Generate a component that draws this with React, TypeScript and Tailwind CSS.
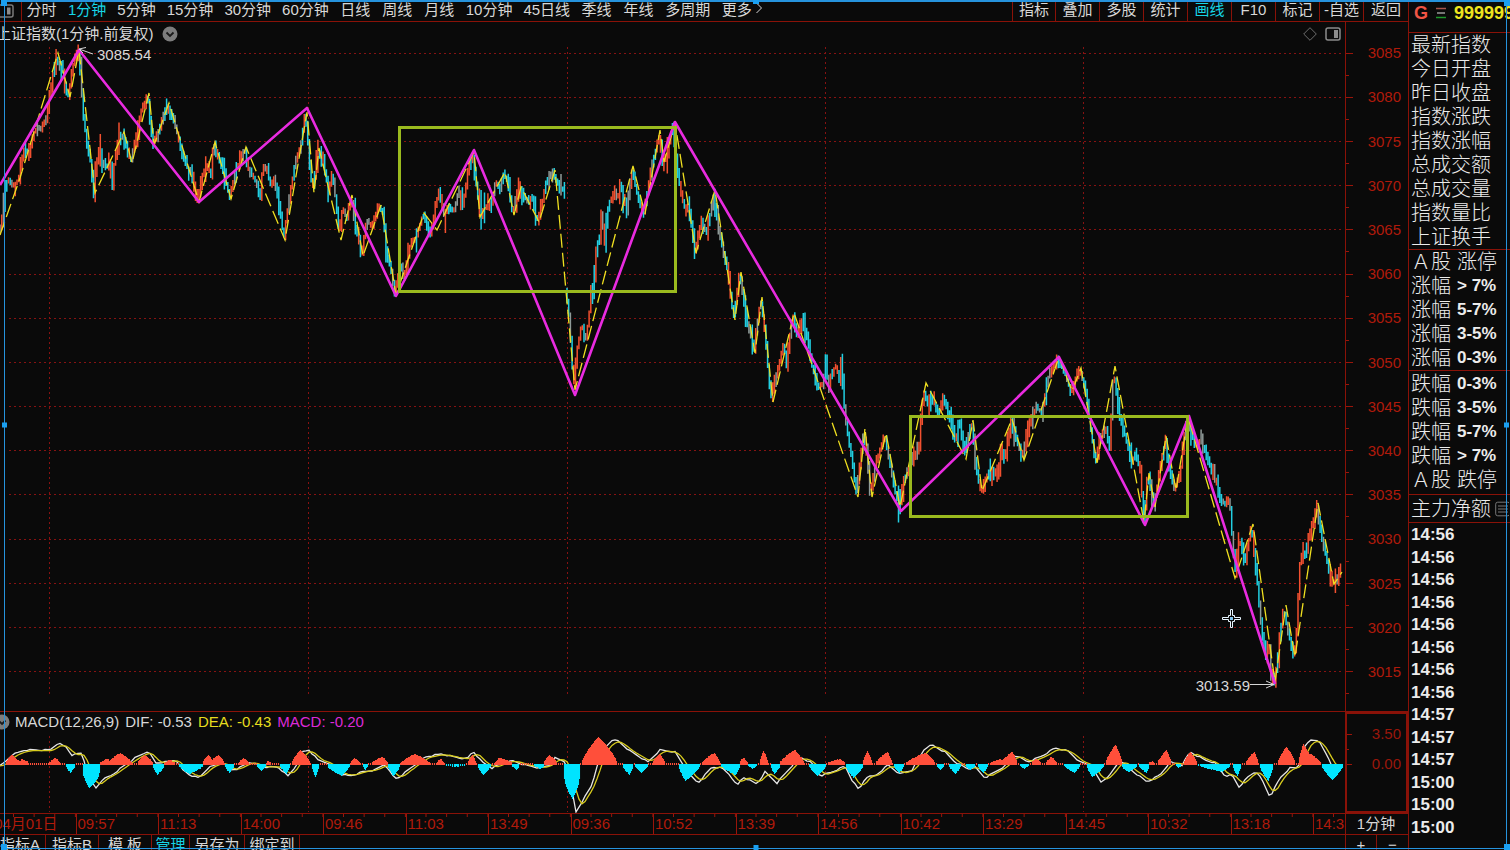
import React from "react";

type Point = [number, number];

const periods = ["分时", "1分钟", "5分钟", "15分钟", "30分钟", "60分钟", "日线", "周线", "月线", "10分钟", "45日线", "季线", "年线", "多周期", "更多"];
const tools = ["指标", "叠加", "多股", "统计", "画线", "F10", "标记", "-自选", "返回"];
const priceLabels = [3085, 3080, 3075, 3070, 3065, 3060, 3055, 3050, 3045, 3040, 3035, 3030, 3025, 3020, 3015];
const timeLabels = ["09:57", "11:13", "14:00", "09:46", "11:03", "13:49", "09:36", "10:52", "13:39", "14:56", "10:42", "13:29", "14:45", "10:32", "13:18", "14:33"];
const quoteRows = ["最新指数", "今日开盘", "昨日收盘", "指数涨跌", "指数涨幅", "总成交额", "总成交量", "指数量比", "上证换手"];
const riseRows = [["A股", "涨停"], ["涨幅", "> 7%"], ["涨幅", "5-7%"], ["涨幅", "3-5%"], ["涨幅", "0-3%"]];
const fallRows = [["跌幅", "0-3%"], ["跌幅", "3-5%"], ["跌幅", "5-7%"], ["跌幅", "> 7%"], ["A股", "跌停"]];
const ticks = ["14:56", "14:56", "14:56", "14:56", "14:56", "14:56", "14:56", "14:56", "14:57", "14:57", "14:57", "15:00", "15:00", "15:00"];

const gridX = [49.5, 308.5, 567.5, 825.5, 1083.5];
const gridY = priceLabels.map((_, i) => Math.round(52.6 + i * 44.18) + 0.5);

const session1: Point[] = [
  [0, 232], [4, 215], [7, 185], [10, 178], [15, 186], [20, 178], [25, 150], [30, 152], [36, 130], [42, 127], [48, 118], [51, 95], [54, 75], [58, 56], [61, 68],
  [64, 64], [66, 84], [70, 95], [74, 68], [77, 54], [80, 52], [83, 90], [85, 115], [88, 142], [92, 160], [95, 190], [98, 165], [100, 146], [103, 160], [107, 166],
  [112, 162], [114, 185], [116, 158], [120, 138], [124, 134], [128, 146], [132, 161], [138, 135], [142, 112], [149, 94], [151, 118], [154, 143], [160, 130],
  [164, 118], [168, 104], [174, 115], [178, 130], [183, 152], [188, 166], [193, 172], [199, 200], [204, 175], [210, 162], [212, 180], [215, 143], [220, 155],
  [226, 175], [231, 197], [237, 170], [246, 148], [250, 168], [256, 178], [262, 198], [264, 165], [268, 168], [272, 184], [276, 178], [280, 200], [285, 236],
  [291, 195], [297, 160], [302, 144], [307, 114], [310, 150], [314, 190], [319, 150], [324, 155], [330, 192], [334, 170], [341, 236], [344, 205], [348, 218],
  [353, 196], [357, 225], [363, 252], [368, 220], [373, 225], [380, 206], [385, 212], [387, 250], [392, 265], [396, 293], [402, 260], [405, 278], [412, 242],
  [418, 236], [424, 214], [432, 234], [437, 204], [441, 190], [445, 214], [450, 206], [455, 211], [460, 190], [464, 206], [470, 168], [474, 153], [478, 185],
  [482, 214], [488, 205], [492, 208], [497, 180], [501, 190], [505, 173], [509, 180], [514, 212], [521, 188], [526, 196], [530, 204], [533, 195], [538, 220],
  [543, 205], [547, 182], [554, 171], [560, 184], [566, 190],
];
const session2: Point[] = [
  [567, 290], [570, 308], [573, 350], [575, 388], [578, 352], [583, 323], [587, 338], [590, 320], [593, 285], [595, 303], [597, 250], [601, 237], [603, 208],
  [606, 243], [610, 203], [616, 190], [619, 199], [622, 180], [628, 212], [633, 170], [638, 190], [645, 213], [652, 172], [657, 150], [660, 134], [664, 160],
  [669, 152], [674, 124], [677, 155], [682, 190], [687, 210], [691, 208], [696, 250], [703, 220], [708, 233], [711, 216], [715, 194], [717, 210], [723, 243],
  [729, 270], [735, 317], [741, 274], [748, 320], [752, 335], [755, 350], [762, 298], [767, 337], [772, 398], [778, 375], [785, 342], [788, 363], [794, 314],
  [799, 336], [802, 322], [808, 330], [813, 363], [819, 386], [825, 383], [827, 354], [830, 392], [833, 370], [838, 365], [841, 382], [843, 354], [846, 410],
  [850, 440], [854, 462], [858, 493], [865, 430], [868, 452], [872, 495], [877, 460], [880, 455], [886, 434], [893, 473], [900, 506], [904, 482], [908, 475],
  [913, 457], [920, 450], [925, 390], [930, 406], [933, 394], [940, 416], [944, 394], [950, 412], [957, 440], [961, 418], [966, 452], [973, 422], [978, 470],
  [982, 490], [990, 472], [998, 474], [1003, 452], [1007, 458], [1012, 421], [1018, 438], [1023, 457], [1030, 425], [1038, 406], [1043, 413], [1050, 375],
  [1054, 366], [1059, 359], [1065, 368], [1072, 390], [1081, 370], [1088, 392], [1091, 420], [1097, 462], [1102, 434], [1108, 428], [1111, 447], [1115, 369],
  [1120, 410], [1126, 432], [1133, 462], [1137, 450], [1142, 472], [1145, 520], [1149, 474], [1155, 505], [1162, 465], [1167, 438], [1170, 466], [1176, 489],
  [1182, 470], [1188, 418], [1193, 434], [1197, 445], [1202, 440], [1208, 453], [1213, 470], [1218, 482], [1222, 500], [1227, 504], [1231, 497], [1234, 540],
  [1237, 570], [1241, 537], [1246, 560], [1253, 526], [1258, 572], [1262, 620], [1267, 655], [1271, 645], [1273, 680], [1276, 680], [1280, 647], [1285, 608],
  [1290, 633], [1295, 655], [1298, 633], [1301, 565], [1304, 550], [1307, 556], [1310, 538], [1313, 527], [1318, 504], [1323, 537], [1328, 557], [1334, 582],
  [1338, 578], [1342, 567],
];
const swings: Point[] = [
  [0, 235], [20, 178], [58, 53], [70, 97], [79, 50], [95, 193], [124, 132], [132, 163], [149, 93], [154, 145], [169, 103], [199, 202], [215, 142], [231, 199],
  [246, 147], [285, 240], [307, 112], [314, 193], [319, 148], [341, 240], [352, 195], [363, 256], [381, 205], [396, 295], [424, 213], [437, 230], [474, 152],
  [480, 217], [505, 172], [514, 215], [521, 187], [539, 222], [555, 170], [575, 390], [633, 166], [645, 214], [660, 130], [664, 162], [675, 123], [696, 253],
  [715, 190], [735, 320], [741, 272], [755, 353], [762, 297], [773, 402], [794, 313], [858, 497], [865, 428], [872, 497], [886, 433], [900, 507], [926, 383],
  [966, 459], [973, 420], [982, 491], [1012, 419], [1024, 460], [1059, 357], [1072, 391], [1081, 368], [1097, 463], [1115, 366], [1144, 522], [1149, 473],
  [1155, 507], [1166, 436], [1176, 490], [1188, 417], [1235, 578], [1253, 524], [1275, 682], [1286, 605], [1295, 657], [1318, 503], [1334, 584], [1342, 572],
];
const waves: Point[] = [
  [0, 185], [79, 50], [199, 202], [307, 108], [396, 296], [474, 150], [575, 395], [675, 122], [901, 511], [1059, 357], [1145, 525], [1189, 416], [1275, 684],
];

/* start, end, peak x, height above the zero line */
const humps: [number, number, number, number][] = [
  [5, 20, 11, 9], [17, 29, 22, 5], [48, 60, 55, 6], [65, 75, 70, -8], [82, 100, 89, -23], [98, 112, 107, 5], [107, 132, 120, 11], [137, 153, 144, 9],
  [152, 164, 157, -10], [163, 175, 169, 4], [178, 204, 189, -9], [202, 213, 208, 9], [209, 224, 218, 9], [224, 234, 229, -8], [238, 249, 243, 6],
  [256, 266, 261, -6], [265, 272, 268, 3], [279, 290, 286, -9], [291, 310, 300, 14], [311, 319, 315, -12], [326, 350, 341, -11], [350, 360, 354, 6],
  [362, 368, 365, -5], [370, 388, 382, 7], [387, 400, 393, -11], [400, 430, 414, 10], [436, 444, 440, 5], [445, 465, 455, -2], [467, 476, 472, 9],
  [477, 491, 483, -10], [494, 513, 499, 6], [511, 520, 516, -5], [532, 545, 540, -4], [543, 557, 549, 9], [563, 580, 572, -34], [581, 617, 598, 27],
  [581, 594, 590, 15], [622, 633, 629, -10], [634, 648, 641, -8], [652, 665, 659, 10], [678, 700, 685, -16], [701, 720, 714, 11], [720, 740, 735, -10],
  [738, 748, 743, 6], [747, 758, 752, -4], [759, 768, 763, 13], [770, 780, 774, -9], [779, 804, 794, 14], [808, 826, 817, -11], [826, 845, 840, 5],
  [845, 863, 853, -13], [862, 872, 867, 13], [875, 892, 887, 12], [893, 904, 899, -8], [905, 935, 925, 11], [936, 944, 940, -5], [948, 961, 955, -9],
  [964, 975, 970, -5], [977, 988, 983, -8], [989, 1005, 1000, 5], [1000, 1017, 1012, 12], [1019, 1029, 1024, -4], [1030, 1041, 1036, 5],
  [1045, 1057, 1051, 7], [1063, 1080, 1074, -8], [1086, 1104, 1092, -12], [1105, 1122, 1115, 19], [1120, 1138, 1128, -7], [1138, 1149, 1146, -8],
  [1148, 1155, 1152, 3], [1157, 1171, 1166, 14], [1174, 1182, 1178, -3], [1183, 1197, 1190, 12], [1197, 1230, 1222, -7], [1232, 1241, 1237, -11],
  [1245, 1258, 1254, 12], [1259, 1273, 1268, -16], [1277, 1295, 1286, 17], [1298, 1312, 1303, 20], [1302, 1321, 1308, 11], [1321, 1343, 1332, -15],
];
const dif: Point[] = [
  [0, 766], [5, 762], [12, 755], [25, 750], [50, 750], [58, 743], [66, 747], [72, 755], [82, 753], [86, 768], [90, 780], [96, 788], [102, 780], [112, 775],
  [125, 765], [135, 758], [148, 751], [156, 763], [165, 762], [176, 760], [183, 770], [190, 775], [199, 778], [208, 768], [222, 762], [230, 770], [237, 769],
  [250, 762], [262, 767], [278, 767], [288, 776], [296, 766], [302, 752], [309, 750], [318, 760], [328, 763], [340, 774], [350, 776], [362, 772], [375, 770],
  [385, 764], [392, 775], [397, 779], [412, 767], [425, 757], [441, 754], [455, 757], [467, 759], [473, 751], [482, 762], [492, 768], [505, 762], [513, 761],
  [525, 765], [540, 768], [550, 765], [555, 758], [566, 762], [570, 780], [576, 812], [583, 800], [592, 785], [597, 766], [603, 750], [612, 740], [618, 741],
  [630, 751], [640, 757], [648, 762], [660, 750], [675, 752], [682, 763], [690, 775], [698, 783], [712, 767], [722, 768], [730, 775], [737, 786], [743, 777],
  [757, 784], [765, 772], [777, 783], [790, 768], [800, 757], [812, 763], [820, 776], [832, 772], [845, 766], [852, 780], [859, 790], [866, 777], [875, 776],
  [888, 765], [900, 774], [912, 770], [925, 748], [932, 745], [945, 752], [955, 762], [968, 769], [975, 767], [985, 778], [1005, 766], [1015, 755], [1028, 762],
  [1042, 756], [1055, 748], [1068, 751], [1080, 762], [1090, 765], [1101, 782], [1110, 775], [1120, 760], [1130, 769], [1147, 782], [1160, 775], [1170, 762],
  [1182, 765], [1190, 752], [1205, 760], [1215, 763], [1225, 776], [1232, 775], [1239, 787], [1248, 777], [1256, 771], [1262, 780], [1270, 797], [1280, 778],
  [1290, 768], [1298, 768], [1304, 748], [1310, 740], [1318, 740], [1328, 757], [1333, 768], [1341, 768],
];

function valueAt(points: Point[], x: number) {
  for (let i = 1; i < points.length; i++) {
    if (x <= points[i][0]) {
      const [x0, y0] = points[i - 1];
      const [x1, y1] = points[i];
      return y0 + ((y1 - y0) * (x - x0)) / (x1 - x0);
    }
  }
  return points[points.length - 1][1];
}

function makeRandom(seed: number) {
  let s = seed;
  return () => {
    s = (s * 16807) % 2147483647;
    return s / 2147483647;
  };
}

const line = (points: Point[]) => points.map(([x, y]) => `${x},${y.toFixed(1)}`).join(" ");

function candlePaths(points: Point[], seed: number) {
  const random = makeRandom(seed);
  const paths = { up: "", down: "", flat: "" };
  const last = points[points.length - 1][0];
  for (let x = points[0][0]; x < last; x += 1.7) {
    const a = valueAt(points, x);
    const b = valueAt(points, Math.min(last, x + 1.7));
    const wick = 2 + random() * random() * 18;
    const top = Math.min(a, b) - wick * random();
    const bottom = Math.max(a, b) + wick * random() + 2;
    const roll = random();
    let kind: "up" | "down" | "flat" = b < a ? "up" : "down";
    if (roll < 0.14) kind = "flat";
    else if (roll < 0.28) kind = kind === "up" ? "down" : "up";
    paths[kind] += `M${x.toFixed(2)} ${top.toFixed(1)}V${bottom.toFixed(1)}`;
  }
  return paths;
}

const candles = [candlePaths(session1, 77), candlePaths(session2, 4211)];

function histogramPaths() {
  let up = "";
  let down = "";
  for (let x = 5; x < 1343; x += 1) {
    let h = 0;
    for (const [start, end, peak, height] of humps) {
      if (x < start || x > end) continue;
      const t = x <= peak ? (x - start) / (peak - start) : (end - x) / (end - peak);
      const v = height * Math.pow(t, height < -20 ? 0.4 : 0.7) + (x % 3 === 0 ? 0.5 : 0);
      if (Math.abs(v) > Math.abs(h)) h = v;
    }
    if (Math.abs(h) < 1.5) {
      if (x % 2 === 0) {
        if (h < 0) down += `M${x}.5 764V766`;
        else up += `M${x}.5 763V765`;
      }
      continue;
    }
    if (h > 0) up += `M${x}.5 765V${Math.round(764 - h)}`;
    else down += `M${x}.5 764V${Math.round(765 - h)}`;
  }
  return { up, down };
}

const histogram = histogramPaths();
const dea: Point[] = [];
const difLine: Point[] = [];
for (let x = 0; x <= 1341; x += 3) {
  const jitter = ((x * 7) % 5) * 0.3 - 0.6;
  difLine.push([x, valueAt(dif, x) + jitter]);
  let sum = 0;
  for (let k = 0; k < 5; k++) sum += valueAt(dif, Math.max(0, x - k * 2));
  dea.push([x, 764 + (sum / 5 - 764) * 0.95]);
}

function PriceChart() {
  return (
    <svg className="absolute inset-0 h-full w-full" viewBox="0 22 1345 689" preserveAspectRatio="none" fill="none" aria-label="上证指数走势">
      <g stroke="#861212" strokeWidth="1" strokeDasharray="2 3">
        {gridY.map((y) => <path key={y} d={`M9 ${y}H1344`} />)}
        {gridX.map((x) => <path key={x} d={`M${x} 47V695`} />)}
      </g>
      {candles.map((c, i) => (
        <g key={i} strokeWidth="1.5">
          <path d={c.flat} stroke="#8f9a98" />
          <path d={c.up} stroke="#f2502f" />
          <path d={c.down} stroke="#22cfe2" />
        </g>
      ))}
      <polyline points={line(swings)} stroke="#f0e020" strokeWidth="1.3" strokeDasharray="14 5" />
      <polyline points={line(waves)} stroke="#e92be0" strokeWidth="2.6" strokeLinejoin="round" />
      <path d="M399.500 127.500H675.500V291.500H399.500ZM910.500 416.500H1187.500V516.500H910.500Z" stroke="#9aba1e" strokeWidth="3" />
      <g stroke="#d6d6d6" strokeWidth="1">
        <path d="M93 54L79 49M86 47.500L79 49L83 53" />
        <path d="M1250 684.500H1274M1266 681L1274 684.500L1266 688" />
      </g>
      <path
        d="M1230.500 609.500H1232.500V615.500H1234.500V617.500H1240.500V619.500H1234.500V621.500H1232.500V627.500H1230.500V621.500H1228.500V619.500H1222.500V617.500H1228.500V615.500H1230.500Z"
        fill="#0a0a0a"
        stroke="#e8f6ff"
      />
      <path d="M1230 617H1233V620H1230Z" fill="#7cc4ee" />
    </svg>
  );
}

function MacdChart() {
  return (
    <svg className="absolute inset-0 h-full w-full" viewBox="0 712 1345 101" preserveAspectRatio="none" fill="none" aria-label="MACD">
      <g stroke="#861212" strokeDasharray="2 3">
        {gridX.map((x) => <path key={x} d={`M${x} 736V812`} />)}
      </g>
      <polyline points={line(difLine)} stroke="#e6e6e6" strokeWidth="1.3" />
      <polyline points={line(dea)} stroke="#d8cc1e" strokeWidth="1.3" />
      <path d={histogram.up} stroke="#ff4f3a" strokeWidth="1.1" />
      <path d={histogram.down} stroke="#00e4ff" strokeWidth="1.1" />
    </svg>
  );
}

function RangeRows({ rows }: { rows: string[][] }) {
  return (
    <ul>
      {rows.map(([name, range]) => (
        <li key={name + range} className="flex h-6 items-center gap-1.5 text-xl leading-6">
          <span>{name === "A股" ? "Ａ股" : name}</span>
          {range.includes("%") ? <b className="text-[17px] font-bold">{range}</b> : <span>{range}</span>}
        </li>
      ))}
    </ul>
  );
}

function ChevronBadge() {
  return (
    <svg width="16" height="16" viewBox="0 0 16 16" fill="none" className="shrink-0">
      <circle cx="8" cy="8" r="7.500" fill="#7d7d7d" />
      <path d="M4.500 6.500L8 10L11.500 6.500" stroke="#1a1a1a" strokeWidth="1.800" />
    </svg>
  );
}

export default function App() {
  return (
    <div className="relative flex h-screen overflow-hidden bg-[#0a0a0a] font-['Liberation_Sans','Noto_Sans_CJK_SC',sans-serif] text-[15px] leading-5 whitespace-nowrap text-[#d8d8d8]">
      <main className="flex min-w-0 flex-1 flex-col">
        <nav className="flex h-[22px] shrink-0 border-b border-[#8a1208] leading-[19px]">
          <button aria-label="侧栏" className="flex w-[22px] items-center border-r border-[#8a1208]">
            <svg width="14" height="14" viewBox="0 0 14 14" fill="none" stroke="#7a7a7a" strokeWidth="1.500">
              <path d="M0 1H11Q13 1 13 3V11Q13 13 11 13H0" />
              <path d="M7 3.500H10.500V10.500H7Z" fill="#8a8a8a" stroke="none" />
            </svg>
          </button>
          <div className="flex min-w-0 flex-1 items-start gap-[11px] overflow-hidden pl-1">
            {periods.map((p) => (
              <button key={p} className={`min-w-[31px] shrink-0 ${p === "1分钟" ? "text-[#16d5e6]" : ""}`}>
                {p}
              </button>
            ))}
            <svg width="8" height="12" viewBox="0 0 8 12" fill="none" stroke="#d8d8d8" className="-ml-2 mt-0.5 shrink-0">
              <path d="M1.500 1L6.500 6L1.500 11" />
            </svg>
          </div>
          <div className="flex shrink-0">
            {tools.map((t) => (
              <button key={t} className={`flex w-11 justify-center border-l border-[#8a1208] first:w-[43px] last:w-[45px] ${t === "画线" ? "text-[#16d5e6]" : ""}`}>
                {t}
              </button>
            ))}
          </div>
        </nav>

        <section className="flex min-h-0 flex-1">
          <div className="relative min-w-0 flex-1">
            <PriceChart />
            <header className="relative flex h-6 items-center justify-between pr-1">
              <h1 className="-ml-1 flex items-center gap-2">
                上证指数(1分钟.前复权)
                <ChevronBadge />
              </h1>
              <div className="flex items-center gap-2">
                <svg width="14" height="14" viewBox="0 0 14 14" fill="none" stroke="#6d6d6d">
                  <path d="M7 .7L13.300 7L7 13.300L.7 7Z" />
                </svg>
                <svg width="16" height="14" viewBox="0 0 16 14" fill="none">
                  <rect x="1" y="1" width="14" height="12" rx="2" stroke="#8a8a8a" strokeWidth="1.500" />
                  <path d="M9 3H13V11H9Z" fill="#8a8a8a" />
                </svg>
              </div>
            </header>
            <span className="absolute top-[23px] left-[97px]">3085.54</span>
            <span className="absolute right-[95px] bottom-[15px]">3013.59</span>
          </div>
          <div className="flex w-[63px] shrink-0 border-l border-[#8a1208] text-[#b01a0b]">
            <svg className="h-full w-2" viewBox="0 22 8 689" preserveAspectRatio="none" stroke="#9a150a">
              {gridY.map((y) => <path key={y} d={`M0 ${y}H7M0 ${y + 22}H3`} />)}
            </svg>
            <ul className="flex flex-1 flex-col pt-[9px] pr-[7px] pb-[17px]">
              {priceLabels.map((p) => (
                <li key={p} className="flex flex-1 items-center justify-end">{p}</li>
              ))}
            </ul>
          </div>
        </section>

        <section className="flex h-[102px] shrink-0 border-t border-[#8a1208]">
          <div className="relative min-w-0 flex-1">
            <MacdChart />
            <div className="relative flex h-5 items-center gap-1.5">
              <span className="-ml-1.5 flex"><ChevronBadge /></span>
              <span className="-ml-px">MACD(12,26,9)</span>
              <span>DIF: -0.53</span>
              <span className="text-[#e6dc1e]">DEA: -0.43</span>
              <span className="text-[#dc2ad8]">MACD: -0.20</span>
            </div>
          </div>
          <div className="flex w-[63px] shrink-0 border-2 border-[#8a1208] text-[#9a170b]">
            <svg width="6" height="98" viewBox="0 0 6 98" stroke="#9a150a">
              <path d="M0 20.500H5M0 35.500H2M0 50.500H5" />
            </svg>
            <div className="flex flex-1 flex-col gap-2.5 pt-2.5 pr-[5px] text-right">
              <span>3.50</span>
              <span>0.00</span>
            </div>
          </div>
        </section>

        <div className="flex h-[22px] shrink-0 border-y border-[#8a1208]">
          <div className="relative grid min-w-0 flex-1 grid-cols-[151fr_repeat(15,165fr)_64fr] text-[#b01a0b]">
            <svg className="absolute inset-x-0 top-0 h-[3px] w-full" viewBox="0 0 1345 3" preserveAspectRatio="none" stroke="#9a150a">
              {Array.from({ length: 65 }, (_, i) => <path key={i} d={`M${13.5 + i * 20.625} 0V3`} />)}
            </svg>
            <span className="flex min-w-0 justify-end overflow-hidden pr-4.5">04月01日</span>
            {timeLabels.map((t, i) => (
              <span key={i} className="min-w-0 overflow-hidden border-l border-[#9a150a] pl-px">{t}</span>
            ))}
          </div>
          <span className="w-[63px] shrink-0 border-l border-[#8a1208] pr-0.5 text-center text-[#d8d8d8]">1分钟</span>
        </div>

        <footer className="flex h-[15px] shrink-0 overflow-hidden">
          <div className="flex min-w-0 flex-1 items-start">
            <button className="w-[46px] shrink-0 border-r border-[#8a1208] pr-2">指标A</button>
            <button className="w-[53px] shrink-0 border-r border-[#8a1208]">指标B</button>
            <button className="w-[53px] shrink-0 border-r border-[#8a1208]">模 板</button>
            <button className="w-[38px] shrink-0 border-r border-[#8a1208] text-[#16d5e6]">管理</button>
            <button className="w-[55px] shrink-0 border-r border-[#8a1208]">另存为</button>
            <button className="w-[55px] shrink-0 border-r border-[#8a1208]">绑定到</button>
          </div>
          <div className="grid w-[63px] shrink-0 grid-cols-2 items-start border-l border-[#8a1208]">
            <button aria-label="放大" className="border-r border-[#8a1208]">+</button>
            <button aria-label="缩小">−</button>
          </div>
        </footer>
      </main>

      <aside className="flex w-[102px] shrink-0 flex-col overflow-hidden border-l border-[#8a1208] font-light text-[#ececec]">
        <header className="flex h-[33px] shrink-0 items-center border-b border-[#8a1208] pb-1.5 pl-[5px] text-lg font-bold">
          <span className="w-[22px] shrink-0 text-[#ef5545]">G</span>
          <svg width="10" height="12" viewBox="0 0 10 12" className="mr-2 shrink-0">
            <path d="M0 1.500H10" stroke="#a8554c" strokeWidth="1.500" />
            <path d="M1 6H9" stroke="#9a9a9a" strokeWidth="1.500" />
            <path d="M0 10.500H10" stroke="#1d9a2c" strokeWidth="1.500" />
          </svg>
          <span className="shrink-0 text-[#efe51f]">999999</span>
        </header>
        <ul className="shrink-0 border-b border-[#8a1208] pl-0.5">
          {quoteRows.map((row) => (
            <li key={row} className="h-6 text-xl leading-6">{row}</li>
          ))}
        </ul>
        <div className="shrink-0 border-b border-[#8a1208] pl-0.5"><RangeRows rows={riseRows} /></div>
        <div className="shrink-0 border-b border-[#8a1208] pt-px pb-0.5 pl-0.5"><RangeRows rows={fallRows} /></div>
        <div className="flex h-7 shrink-0 items-center gap-1 border-b border-[#8a1208] pl-0.5 text-xl leading-6">
          主力净额
          <svg width="14" height="16" viewBox="0 0 14 16" fill="none" stroke="#777" className="shrink-0">
            <rect x=".7" y="1.200" width="14" height="13.600" rx="2" />
            <path d="M3 5H13M3 8H13M3 11H13" />
          </svg>
        </div>
        <ul className="flex min-h-0 flex-1 flex-col pt-px pb-[11px] pl-0.5 text-[17px] font-bold">
          {ticks.map((t, i) => (
            <li key={i} className="flex min-h-0 flex-1 items-center">{t}</li>
          ))}
        </ul>
      </aside>

      <div className="pointer-events-none absolute top-0 right-[3px] bottom-px left-1 border-x border-t-2 border-b border-[#2693dd]">
        <i className="absolute -top-0.5 -left-1 size-1.5 bg-[#1a9ff0]" />
        <i className="absolute -top-1 left-1/2 size-1.5 -translate-x-1/2 bg-[#1a9ff0]" />
        <i className="absolute -top-0.5 -right-1 size-1.5 bg-[#1a9ff0]" />
        <i className="absolute top-1/2 -left-[3px] size-[5px] -translate-y-1/2 bg-[#1a9ff0]" />
        <i className="absolute top-1/2 -right-[3px] size-[5px] -translate-y-1/2 bg-[#1a9ff0]" />
        <i className="absolute -bottom-0.5 -left-1 size-1.5 bg-[#1a9ff0]" />
        <i className="absolute -bottom-0.5 left-1/2 size-[5px] -translate-x-1/2 bg-[#1a9ff0]" />
        <i className="absolute -right-1 -bottom-0.5 size-1.5 bg-[#1a9ff0]" />
      </div>
    </div>
  );
}
